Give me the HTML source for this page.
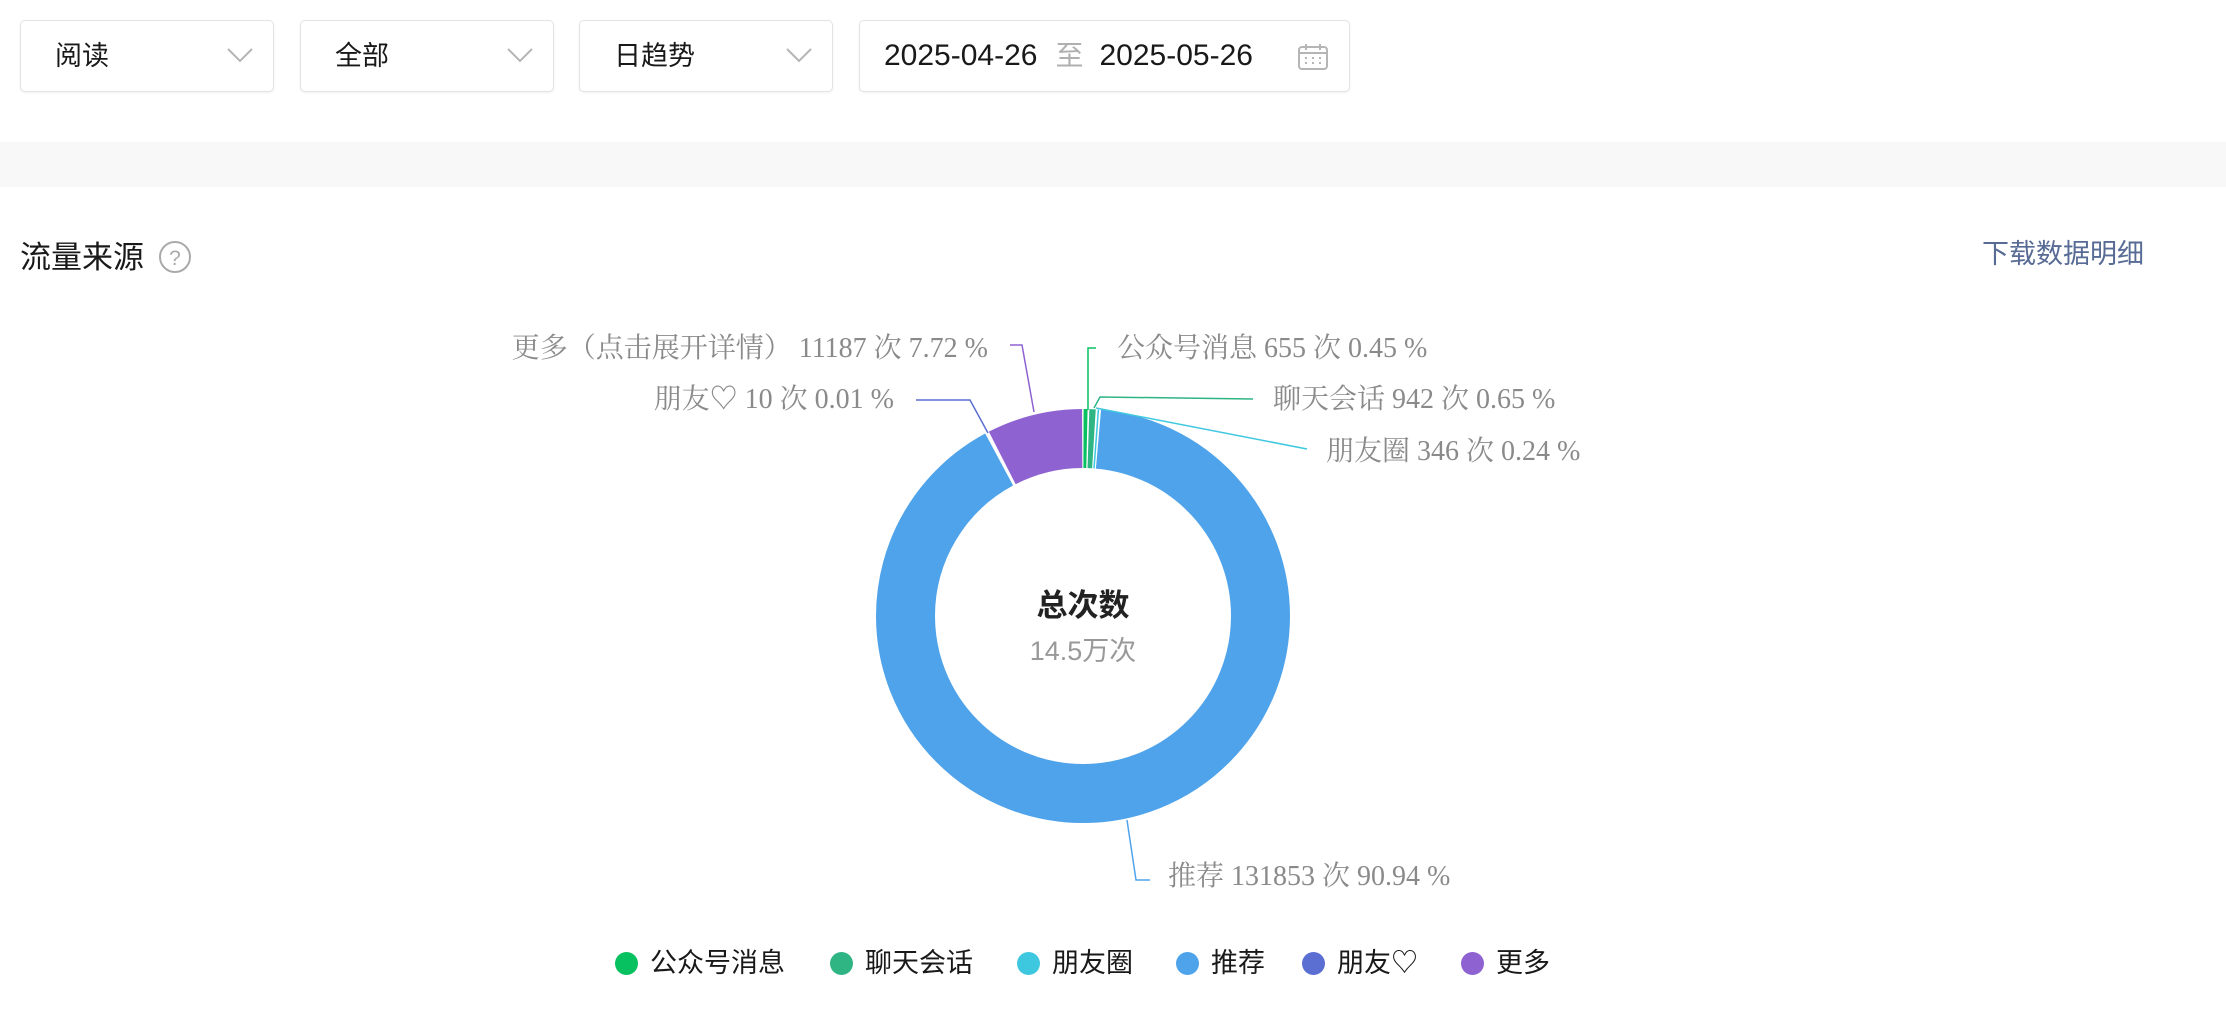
<!DOCTYPE html>
<html><head><meta charset="utf-8"><style>
body{margin:0;width:2226px;height:1018px;background:#fff;font-family:"Liberation Sans","Noto Sans CJK SC",sans-serif;position:relative;overflow:hidden;color:#191919}
.box{position:absolute;top:20px;height:72px;border:1.5px solid #e3e3e3;border-radius:5px;box-sizing:border-box;background:#fff;box-shadow:0 1px 2px rgba(0,0,0,.06)}
.box span{position:absolute;left:34px;top:0;line-height:70px;font-size:27px}
.box svg{position:absolute;right:20px;top:26px}
.band{position:absolute;left:0;right:0;top:142px;height:45px;background:#f8f8f8}
.t{position:absolute;white-space:nowrap}
.lab{font-family:"Liberation Serif","Noto Serif CJK SC",serif;font-size:28px;fill:#8a8a8a}
.lg{position:absolute;top:946px;font-size:27px;line-height:34px;white-space:nowrap}
.lg i{display:inline-block;width:23px;height:23px;border-radius:50%;vertical-align:-3px;margin-right:12px}
</style></head><body>
<div class="box" style="left:20px;width:254px"><span>阅读</span><svg width="26" height="16"><path d="M1 2 L13 14 L25 2" fill="none" stroke="#b5b5b5" stroke-width="2"/></svg></div>
<div class="box" style="left:300px;width:254px"><span>全部</span><svg width="26" height="16"><path d="M1 2 L13 14 L25 2" fill="none" stroke="#b5b5b5" stroke-width="2"/></svg></div>
<div class="box" style="left:579px;width:254px"><span>日趋势</span><svg width="26" height="16"><path d="M1 2 L13 14 L25 2" fill="none" stroke="#b5b5b5" stroke-width="2"/></svg></div>
<div class="box" style="left:859px;width:491px"><span style="left:24px;font-size:30px">2025-04-26<span style="position:static;color:#b0b0b0;margin:0 16px 0 18px;font-size:28px">至</span>2025-05-26</span>
<svg width="32" height="28" style="right:20px;top:22px"><rect x="2" y="4" width="28" height="22" rx="3" fill="none" stroke="#b5b5b5" stroke-width="2"/><path d="M9 1v6M23 1v6M2 10h28" stroke="#b5b5b5" stroke-width="2"/><path d="M8 15h2M15 15h2M22 15h2M8 20h2M15 20h2M22 20h2" stroke="#b5b5b5" stroke-width="2"/></svg></div>
<div class="band"></div>
<div class="t" style="left:20px;top:238px;font-size:31px;line-height:40px">流量来源</div>
<svg class="t" style="left:158px;top:240px" width="34" height="34"><circle cx="17" cy="17" r="15" fill="none" stroke="#aaa" stroke-width="2"/><text x="17" y="25" text-anchor="middle" font-size="21" fill="#aaa" font-family="Liberation Sans">?</text></svg>
<div class="t" style="left:1982px;top:236px;font-size:27px;line-height:36px;color:#576b95">下载数据明细</div>
<svg class="t" style="left:0;top:0" width="2226" height="1018">
<g fill="none" stroke-width="59" transform="rotate(-90 1083 616)">
<circle cx="1083" cy="616" r="177.5" stroke="#07c160" stroke-dasharray="3.5 1200" stroke-dashoffset="-0.5"/>
<circle cx="1083" cy="616" r="177.5" stroke="#2fb584" stroke-dasharray="5.5 1200" stroke-dashoffset="-5.5"/>
<circle cx="1083" cy="616" r="177.5" stroke="#3ec8df" stroke-dasharray="1.5 1200" stroke-dashoffset="-12.5"/>
<circle cx="1083" cy="616" r="177.5" stroke="#4fa3ea" stroke-dasharray="1012 1200" stroke-dashoffset="-15.5"/>
<circle cx="1083" cy="616" r="177.5" stroke="#8f62d2" stroke-dasharray="83 1200" stroke-dashoffset="-1031"/>
</g>
<g fill="none" stroke-width="1.5">
<path d="M1034 412 L1022 345 L1010 345" stroke="#8f62d2"/>
<path d="M988 433 L970 400 L916 400" stroke="#5a6fd1"/>
<path d="M1088 410 L1088 348 L1096 348" stroke="#07c160"/>
<path d="M1094 408 L1100 397 L1253 399" stroke="#2fb584"/>
<path d="M1096 408 L1307 449" stroke="#3ec8df"/>
<path d="M1127 820 L1136 880 L1150 880" stroke="#4fa3ea"/>
</g>
<text class="lab" x="988" y="357" text-anchor="end">更多（点击展开详情） 11187 次 7.72 %</text>
<text class="lab" x="894" y="408" text-anchor="end">朋友♡ 10 次 0.01 %</text>
<text class="lab" x="1117" y="357">公众号消息 655 次 0.45 %</text>
<text class="lab" x="1273" y="408">聊天会话 942 次 0.65 %</text>
<text class="lab" x="1326" y="460">朋友圈 346 次 0.24 %</text>
<text class="lab" x="1168" y="885">推荐 131853 次 90.94 %</text>
<text x="1083" y="616" text-anchor="middle" font-size="31" font-weight="bold" fill="#222" font-family="Liberation Sans,Noto Sans CJK SC,sans-serif">总次数</text>
<text x="1083" y="660" text-anchor="middle" font-size="27" fill="#999" font-family="Liberation Sans,Noto Sans CJK SC,sans-serif">14.5万次</text>
</svg>
<div class="lg" style="left:615px"><i style="background:#07c160"></i>公众号消息</div>
<div class="lg" style="left:830px"><i style="background:#2fb584"></i>聊天会话</div>
<div class="lg" style="left:1017px"><i style="background:#3ec8df"></i>朋友圈</div>
<div class="lg" style="left:1176px"><i style="background:#4fa3ea"></i>推荐</div>
<div class="lg" style="left:1302px"><i style="background:#5a6fd1"></i>朋友♡</div>
<div class="lg" style="left:1461px"><i style="background:#8f62d2"></i>更多</div>
</body></html>
